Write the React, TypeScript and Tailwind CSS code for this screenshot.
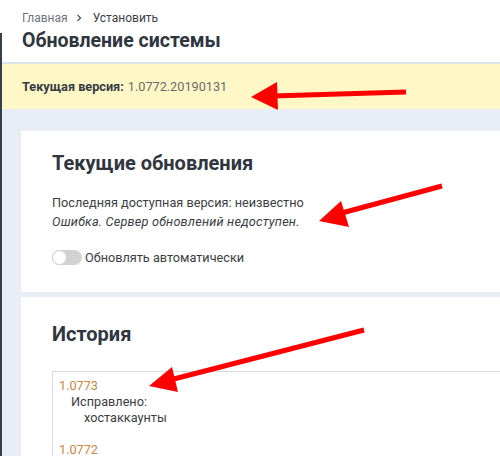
import React from "react";

function Arrow({ x1, y1, x2, y2, tip, c1, c2 }: { x1: number; y1: number; x2: number; y2: number; tip: [number, number]; c1: [number, number]; c2: [number, number] }) {
  return (
    <g>
      <line x1={x1} y1={y1} x2={x2} y2={y2} stroke="#ff0000" strokeWidth={5} />
      <polygon points={`${tip[0]},${tip[1]} ${c1[0]},${c1[1]} ${c2[0]},${c2[1]}`} fill="#ff0000" />
    </g>
  );
}

export default function App() {
  return (
    <div
      className="relative flex w-[500px] h-[456px] overflow-hidden bg-white"
      style={{ fontFamily: "Roboto, 'Liberation Sans', sans-serif" }}
    >
      <div className="flex flex-col w-[2px] shrink-0">
        <div className="h-[33px] shrink-0 bg-white" />
        <div className="flex-1 bg-[#36404b]" />
      </div>
      <div className="flex flex-col flex-1 min-w-0 min-h-0">
        <div className="h-[62px] shrink-0 bg-white pl-[20px] pt-[10px]">
          <div className="flex items-center h-[16px] text-[12px] leading-[16px]">
            <span className="text-[#6e747c]">Главная</span>
            <svg width="8" height="8" viewBox="0 0 8 8" className="ml-[7px] mr-[10px]">
              <path d="M2.5 1 L5.5 4 L2.5 7" stroke="#555" strokeWidth="1.3" fill="none" />
            </svg>
            <span className="text-[#3b4047]">Установить</span>
          </div>
          <div className="mt-[2px] text-[19.5px] leading-[26px] font-bold text-[#2f3640]">
            Обновление системы
          </div>
        </div>
        <div className="h-[2px] shrink-0 bg-[#dde1e8]" />
        <div className="h-[45px] shrink-0 bg-[#fff8c6] pl-[20px] flex items-center text-[12.7px] leading-[19px]">
          <span className="font-bold text-[#353b44]">Текущая версия:</span>
          <span className="ml-[4px] text-[#6a6a6a]">1.0772.20190131</span>
        </div>
        <div className="flex-1 min-h-0 bg-[#e9edf5] pt-[22px] pl-[19px] flex flex-col gap-[5px]">
          <div className="bg-white h-[161px] shrink-0 pl-[31px] pt-[20px]">
            <div className="text-[20px] leading-[24px] font-bold text-[#2f3640]">Текущие обновления</div>
            <div className="mt-[18px] text-[12.7px] leading-[19px] text-[#3a3d42]">
              <div>Последняя доступная версия: неизвестно</div>
              <div className="italic tracking-[0.2px]">Ошибка. Сервер обновлений недоступен.</div>
            </div>
            <div className="mt-[17px] flex items-center text-[12.7px] leading-[19px] text-[#3a3d42]">
              <div className="relative w-[30px] h-[15px] rounded-full bg-[#d2d2d2] shrink-0">
                <div className="absolute left-[0px] top-[0px] w-[15px] h-[15px] rounded-full bg-white border border-[#cfcfcf]" />
              </div>
              <span className="ml-[3px]">Обновлять автоматически</span>
            </div>
          </div>
          <div className="shrink-0 h-[200px] bg-white pl-[31px] pt-[25px]">
            <div className="text-[20px] leading-[24px] font-bold text-[#2f3640]">История</div>
            <div className="mt-[25px] border-t border-l border-[#d9d9d9] pl-[6px] pt-[6px] text-[12.7px] leading-[16px] text-[#3a3d42] h-[120px]">
              <div className="text-[#c4883f]">1.0773</div>
              <div className="pl-[12px]">Исправлено:</div>
              <div className="pl-[25px]">хостаккаунты</div>
              <div className="h-[16px]" />
              <div className="text-[#c4883f]">1.0772</div>
            </div>
          </div>
        </div>
      </div>
      <svg className="absolute inset-0 pointer-events-none" width="500" height="456" viewBox="0 0 500 456">
        <Arrow x1={406} y1={92} x2={272} y2={96} tip={[251, 97]} c1={[277, 82]} c2={[278, 110]} />
        <Arrow x1={442} y1={186} x2={338} y2={214} tip={[319, 221]} c1={[341, 201]} c2={[349, 227]} />
        <Arrow x1={364} y1={330} x2={170} y2={380} tip={[149, 386]} c1={[172, 367]} c2={[178, 392]} />
      </svg>
    </div>
  );
}
